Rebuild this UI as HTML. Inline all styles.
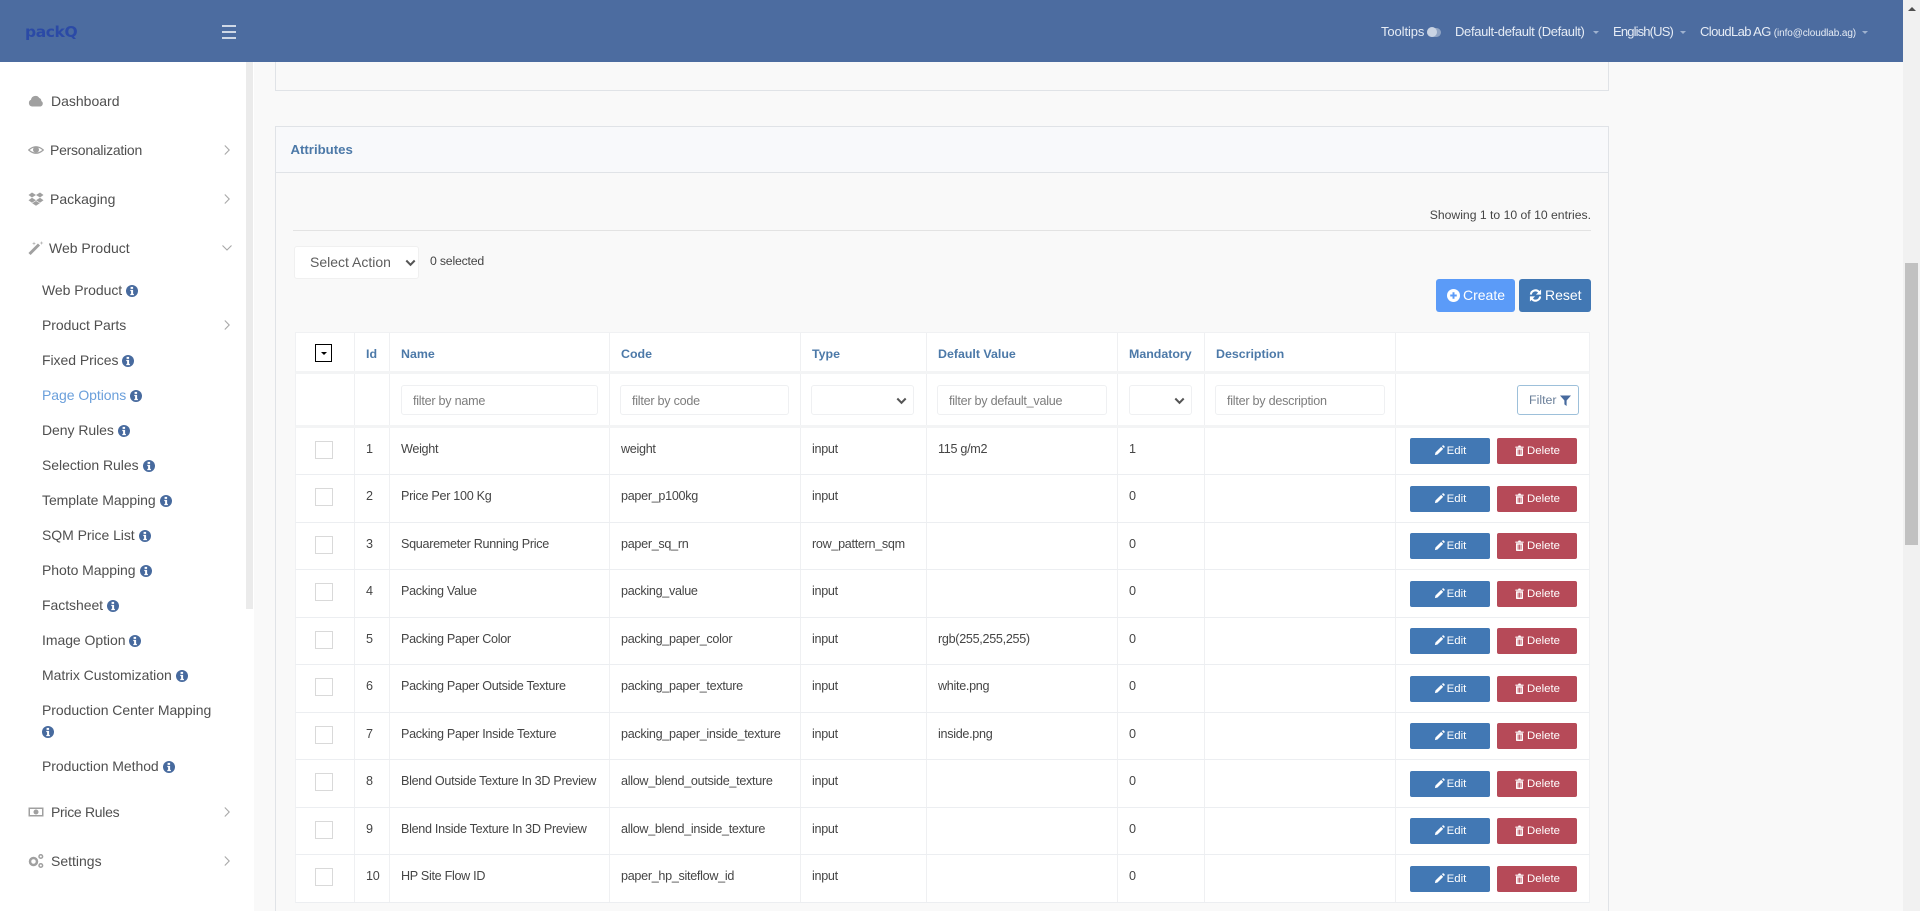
<!DOCTYPE html>
<html><head><meta charset="utf-8"><title>packQ</title>
<style>
*{box-sizing:border-box}
html,body{margin:0;padding:0;width:1920px;height:911px;overflow:hidden;background:#f9f9f9;font-family:"Liberation Sans",Arial,sans-serif;color:#454545}
#wrap{position:relative;width:1920px;height:911px;overflow:hidden}
.a{position:absolute;white-space:nowrap}
#hdr{position:absolute;left:0;top:0;width:1903px;height:62px;background:#4c6ca0;z-index:5}
.ht{position:absolute;top:24px;line-height:16px;font-size:13px;color:#e6ecf5;white-space:nowrap}
.car{position:absolute;top:31px;width:0;height:0;border-left:3px solid transparent;border-right:3px solid transparent;border-top:3px solid #9fb2cf}
.hb{position:absolute;left:222px;width:14px;height:2px;background:#cfd8e6}
#sb{position:absolute;left:0;top:62px;width:254px;height:849px;background:#fff}
#sbt{position:absolute;left:246px;top:62px;width:7px;height:547px;background:#ebebeb}
.m{position:absolute;font-size:14px;line-height:20px;color:#4f4f4f;white-space:nowrap}
.s{position:absolute;left:42px;font-size:14px;line-height:20px;color:#4f4f4f;white-space:nowrap;letter-spacing:-.05px}
.s svg{width:12px;height:12px;vertical-align:-1.5px;margin-left:4px}
.chev{position:absolute;left:223px;width:8px;height:12px}
.mi{position:absolute;left:28px;width:16px;height:16px}
#vs{position:absolute;left:1903px;top:0;width:17px;height:911px;background:#f1f1f1}
#vt{position:absolute;left:1905px;top:263px;width:13px;height:282px;background:#c1c1c1}
.p{position:absolute;left:275px;width:1334px;border:1px solid #e0e3e7;background:#f9f9f9}
.r{position:absolute;left:295px;width:1295px;display:grid;grid-template-columns:59px 35px 220px 191px 126px 191px 87px 191px 195px;background:#fff;border-bottom:1px solid #eceef1;font-size:12.6px;letter-spacing:-.3px;color:#454545;border-left:1px solid #f0f1f3;border-right:1px solid #f0f1f3}
.r>div{border-right:1px solid #eff0f2;padding:11px 0 0 11px;line-height:20px;white-space:nowrap;position:relative}
.r>div:last-child{border-right:0}
.r.h>div{font-weight:bold;color:#4c79a8;font-size:12.4px;padding-top:11px;letter-spacing:0}
.cb{position:absolute;left:19px;top:12.5px;width:18px;height:18px;border:1px solid #d9d9d9;background:#fff}
.f{position:absolute;top:385px;height:30px;border:1px solid #eff0f2;border-radius:3px;background:#fff;color:#7d7d7d;font-size:12.6px;letter-spacing:-.25px;line-height:30px;padding-left:11px;white-space:nowrap}
.f svg{position:absolute;right:6px;top:11px;width:11px;height:8px}
.b{position:absolute;height:26px;width:80px;border-radius:2px;color:#fff;font-size:11.4px;line-height:26px;text-align:center;white-space:nowrap}
.b svg{width:11px;height:11px;vertical-align:-1.5px;margin-right:2px}
.e{left:1410px;background:#4278b4}
.d{left:1497px;background:#b64a58}
</style></head><body><div id="wrap">
<svg width="0" height="0" style="position:absolute">
<symbol id="i" viewBox="0 0 12 12"><circle cx="6" cy="6" r="6" fill="#476a9e"/><rect x="4.6" y="1.9" width="2.5" height="2" fill="#fff"/><path d="M4.3 4.9H7.1V8.9H7.9V10.1H4.3V8.9H5.1V6.1H4.3Z" fill="#fff"/></symbol>
<symbol id="c" viewBox="0 0 8 12"><path d="M1.8 1.5L6.2 6L1.8 10.5" fill="none" stroke="#a8a8a8" stroke-width="1.1"/></symbol>
<symbol id="pen" viewBox="0 0 12 12"><path d="M1 11L1.6 8.2L7.8 2L10 4.2L3.8 10.4ZM8.6 1.2L9.4.5Q10 0 10.6.6L11.4 1.4Q12 2 11.5 2.6L10.8 3.4Z" fill="#fff"/></symbol>
<symbol id="tr" viewBox="0 0 12 12"><path d="M4.4 1.8L5 .5H7L7.6 1.8H10.5V3H1.5V1.8ZM2.2 3.6H9.8V11Q9.8 12 9 12H3Q2.2 12 2.2 11ZM4 5V10.5H5V5ZM5.6 5V10.5H6.6V5ZM7.2 5V10.5H8.2V5Z" fill="#fff" fill-rule="evenodd"/></symbol>
<symbol id="dn" viewBox="0 0 11 8"><path d="M1.3 1.5L5.5 5.8L9.7 1.5" fill="none" stroke="#555" stroke-width="2"/></symbol>
</svg>

<div id="hdr">
<div class="a" style="left:25px;top:20px;font-family:'DejaVu Sans',sans-serif;font-weight:bold;font-size:15.5px;line-height:24px;color:#2b4aa6;letter-spacing:-.4px">packQ</div>
<div class="hb" style="top:25px"></div><div class="hb" style="top:31px"></div><div class="hb" style="top:37px"></div>
<div class="ht" style="left:1381px;letter-spacing:-.1px">Tooltips</div>
<div class="a" style="left:1427px;top:27.5px;width:14px;height:9px;border-radius:5px;background:#8fa3c3"></div>
<div class="a" style="left:1427px;top:27px;width:10px;height:10px;border-radius:5px;background:#c9d3e3"></div>
<div class="ht" style="left:1455px;letter-spacing:-.34px">Default-default (Default)</div><div class="car" style="left:1593px"></div>
<div class="ht" style="left:1613px;letter-spacing:-.85px">English(US)</div><div class="car" style="left:1680px"></div>
<div class="ht" style="left:1700px;letter-spacing:-.6px">CloudLab AG <span style="font-size:10px;letter-spacing:-.1px">(info@cloudlab.ag)</span></div><div class="car" style="left:1862px"></div>
</div>

<div id="sb"></div><div id="sbt"></div>
<svg class="mi" style="top:93px" viewBox="0 0 16 16"><path d="M4 13.5A3.5 3.5 0 0 1 3 6.8 4.5 4.5 0 0 1 11.3 5 3 3 0 0 1 13.3 8 3 3 0 0 1 12.5 13.5Z" fill="#a0a0a0"/></svg>
<div class="m" style="left:51px;top:91px">Dashboard</div>
<svg class="mi" style="top:142px" viewBox="0 0 16 16"><path d="M.7 8Q8 1.5 15.3 8Q8 14.5.7 8Z" fill="none" stroke="#a0a0a0" stroke-width="1.2"/><circle cx="8" cy="7.8" r="3" fill="#a0a0a0"/></svg>
<div class="m" style="left:50px;top:140px;letter-spacing:-.25px">Personalization</div>
<svg class="chev" style="top:144px"><use href="#c"/></svg>
<svg class="mi" style="top:191px" viewBox="0 0 16 16"><path d="M4 1.5L8 4 4 6.5 .5 4ZM12 1.5L15.5 4 12 6.5 8 4ZM4 6.7L8 9.2 4 11.7 .5 9.2ZM12 6.7L15.5 9.2 12 11.7 8 9.2ZM4.2 12.3L8 10 11.8 12.3 8 14.8Z" fill="#a0a0a0"/></svg>
<div class="m" style="left:50px;top:189px">Packaging</div>
<svg class="chev" style="top:193px"><use href="#c"/></svg>
<svg class="mi" style="top:240px" viewBox="0 0 16 16"><path d="M1.5 14L11 4.5" stroke="#a0a0a0" stroke-width="3" fill="none"/><path d="M13.5 1L14 2.5 15.5 3 14 3.5 13.5 5 13 3.5 11.5 3 13 2.500ZM6 1.500L6.500 3 8 3.500 6.500 4 6 5.500 5.500 4 4 3.500 5.500 3Z" fill="#b5b5b5"/></svg>
<div class="m" style="left:49px;top:238px">Web Product</div>
<svg class="a" style="left:221px;top:244px;width:12px;height:8px" viewBox="0 0 12 8"><path d="M1.500 1.500L6 6 10.500 1.500" fill="none" stroke="#a8a8a8" stroke-width="1.100"/></svg>
<div class="s" style="top:280px">Web Product<svg><use href="#i"/></svg></div>
<div class="s" style="top:315px">Product Parts</div><svg class="chev" style="top:319px"><use href="#c"/></svg>
<div class="s" style="top:350px">Fixed Prices<svg><use href="#i"/></svg></div>
<div class="s" style="top:385px;color:#6a9fdb">Page Options<svg><use href="#i"/></svg></div>
<div class="s" style="top:420px">Deny Rules<svg><use href="#i"/></svg></div>
<div class="s" style="top:455px">Selection Rules<svg><use href="#i"/></svg></div>
<div class="s" style="top:490px">Template Mapping<svg><use href="#i"/></svg></div>
<div class="s" style="top:525px">SQM Price List<svg><use href="#i"/></svg></div>
<div class="s" style="top:560px">Photo Mapping<svg><use href="#i"/></svg></div>
<div class="s" style="top:595px">Factsheet<svg><use href="#i"/></svg></div>
<div class="s" style="top:630px">Image Option<svg><use href="#i"/></svg></div>
<div class="s" style="top:665px">Matrix Customization<svg><use href="#i"/></svg></div>
<div class="s" style="top:700px">Production Center Mapping</div>
<div class="s" style="top:721px"><svg style="margin-left:0"><use href="#i"/></svg></div>
<div class="s" style="top:756px">Production Method<svg><use href="#i"/></svg></div>
<svg class="mi" style="top:804px" viewBox="0 0 16 16"><path d="M.5 3.500H15.500V12.500H.5ZM2 5V11H14V5Z" fill="#a0a0a0" fill-rule="evenodd"/><rect x="5.500" y="5.500" width="5" height="5" rx="2.500" fill="#a0a0a0"/></svg>
<div class="m" style="left:51px;top:802px;letter-spacing:-.3px">Price Rules</div><svg class="chev" style="top:806px"><use href="#c"/></svg>
<svg class="mi" style="top:853px" viewBox="0 0 16 16"><circle cx="5.500" cy="8.500" r="3.500" fill="none" stroke="#a0a0a0" stroke-width="2.500"/><circle cx="12.800" cy="3.500" r="1.800" fill="none" stroke="#a0a0a0" stroke-width="1.500"/><circle cx="12.800" cy="12.500" r="1.800" fill="none" stroke="#a0a0a0" stroke-width="1.500"/></svg>
<div class="m" style="left:51px;top:851px">Settings</div><svg class="chev" style="top:855px"><use href="#c"/></svg>

<div class="p" style="top:50px;height:41px"></div>
<div class="p" style="top:126px;height:785px;border-bottom:0"></div>
<div class="a" style="left:276px;top:127px;width:1332px;height:46px;background:#f8f9fb;border-bottom:1px solid #e0e3e7"></div>
<div class="a" style="left:290.5px;top:140.5px;font-size:13.2px;line-height:18px;font-weight:bold;color:#4c79a8">Attributes</div>

<div class="a" style="right:329px;top:206px;font-size:12.2px;line-height:18px;color:#454545">Showing 1 to 10 of 10 entries.</div>
<div class="a" style="left:293px;top:230px;width:1298px;height:1px;background:#e3e3e3"></div>
<div class="a" style="left:294px;top:246px;width:125px;height:33px;background:#fff;border:1px solid #f0f0f0;border-radius:3px;font-size:14px;line-height:30px;padding-left:15px;color:#5d5d5d">Select Action<svg style="position:absolute;left:110px;top:12px;width:11px;height:8px"><use href="#dn"/></svg></div>
<div class="a" style="left:430px;top:252px;font-size:12.3px;line-height:18px;letter-spacing:-.2px">0 selected</div>
<div class="a" style="left:1436px;top:279px;width:79px;height:33px;background:#5b9bf8;border-radius:3px;color:#fff;font-size:14px;line-height:33px;padding-left:11px"><svg style="width:13px;height:13px;vertical-align:-2px;margin-right:3px" viewBox="0 0 12 12"><circle cx="6" cy="6" r="6" fill="#fff"/><path d="M6 3V9M3 6H9" stroke="#5b9bf8" stroke-width="1.800"/></svg>Create</div>
<div class="a" style="left:1519px;top:279px;width:72px;height:33px;background:#4278b4;border-radius:3px;color:#fff;font-size:14px;line-height:33px;padding-left:10px"><svg style="width:13px;height:13px;vertical-align:-2px;margin-right:3px" viewBox="0 0 14 14"><path d="M2 6A5 5 0 0 1 11 3.500M12 8A5 5 0 0 1 3 10.500" fill="none" stroke="#fff" stroke-width="2.200"/><path d="M13 .5V6H7.500ZM1 13.500V8H6.500Z" fill="#fff"/></svg>Reset</div>

<div class="r h" style="top:332px;height:42px;border-top:1px solid #f0f1f3;border-bottom:3px solid #f3f4f5"><div></div><div>Id</div><div>Name</div><div>Code</div><div>Type</div><div>Default Value</div><div>Mandatory</div><div>Description</div><div></div></div>
<div class="a" style="left:315px;top:344px;width:17px;height:18px;border:1px solid #000;background:#fff"></div>
<div class="a" style="left:320.500px;top:352px;width:0;height:0;border-left:3px solid transparent;border-right:3px solid transparent;border-top:3px solid #000"></div>
<div class="r" style="top:374px;height:54px;border-bottom:3px solid #f3f4f5"><div></div><div></div><div></div><div></div><div></div><div></div><div></div><div></div><div></div></div>
<div class="f" style="left:401px;width:197px">filter by name</div>
<div class="f" style="left:620px;width:169px">filter by code</div>
<div class="f" style="left:811px;width:103px"><svg><use href="#dn"/></svg></div>
<div class="f" style="left:937px;width:170px">filter by default_value</div>
<div class="f" style="left:1129px;width:63px"><svg><use href="#dn"/></svg></div>
<div class="f" style="left:1215px;width:170px">filter by description</div>
<div class="a" style="left:1517px;top:385px;width:62px;height:30px;border:1px solid #9dc0da;border-radius:3px;background:#fff;color:#6a7f99;font-size:12.400px;line-height:28px;padding-left:11px">Filter <svg style="width:11px;height:11px;vertical-align:-1.500px" viewBox="0 0 10 10"><path d="M0 .5H10L6 5V10L4 8.500V5Z" fill="#476a9e"/></svg></div>

<div class="r" style="top:428px;height:47px"><div><span class="cb"></span></div><div>1</div><div>Weight</div><div>weight</div><div>input</div><div>115 g/m2</div><div>1</div><div></div><div></div></div>
<div class="r" style="top:475px;height:48px"><div><span class="cb"></span></div><div>2</div><div>Price Per 100 Kg</div><div>paper_p100kg</div><div>input</div><div></div><div>0</div><div></div><div></div></div>
<div class="r" style="top:523px;height:47px"><div><span class="cb"></span></div><div>3</div><div>Squaremeter Running Price</div><div>paper_sq_rn</div><div>row_pattern_sqm</div><div></div><div>0</div><div></div><div></div></div>
<div class="r" style="top:570px;height:48px"><div><span class="cb"></span></div><div>4</div><div>Packing Value</div><div>packing_value</div><div>input</div><div></div><div>0</div><div></div><div></div></div>
<div class="r" style="top:618px;height:47px"><div><span class="cb"></span></div><div>5</div><div>Packing Paper Color</div><div>packing_paper_color</div><div>input</div><div>rgb(255,255,255)</div><div>0</div><div></div><div></div></div>
<div class="r" style="top:665px;height:48px"><div><span class="cb"></span></div><div>6</div><div>Packing Paper Outside Texture</div><div>packing_paper_texture</div><div>input</div><div>white.png</div><div>0</div><div></div><div></div></div>
<div class="r" style="top:713px;height:47px"><div><span class="cb"></span></div><div>7</div><div>Packing Paper Inside Texture</div><div>packing_paper_inside_texture</div><div>input</div><div>inside.png</div><div>0</div><div></div><div></div></div>
<div class="r" style="top:760px;height:48px"><div><span class="cb"></span></div><div>8</div><div>Blend Outside Texture In 3D Preview</div><div>allow_blend_outside_texture</div><div>input</div><div></div><div>0</div><div></div><div></div></div>
<div class="r" style="top:808px;height:47px"><div><span class="cb"></span></div><div>9</div><div>Blend Inside Texture In 3D Preview</div><div>allow_blend_inside_texture</div><div>input</div><div></div><div>0</div><div></div><div></div></div>
<div class="r" style="top:855px;height:48px"><div><span class="cb"></span></div><div>10</div><div>HP Site Flow ID</div><div>paper_hp_siteflow_id</div><div>input</div><div></div><div>0</div><div></div><div></div></div>

<div class="b e" style="top:438px"><svg><use href="#pen"/></svg>Edit</div><div class="b d" style="top:438px"><svg><use href="#tr"/></svg>Delete</div>
<div class="b e" style="top:486px"><svg><use href="#pen"/></svg>Edit</div><div class="b d" style="top:486px"><svg><use href="#tr"/></svg>Delete</div>
<div class="b e" style="top:533px"><svg><use href="#pen"/></svg>Edit</div><div class="b d" style="top:533px"><svg><use href="#tr"/></svg>Delete</div>
<div class="b e" style="top:581px"><svg><use href="#pen"/></svg>Edit</div><div class="b d" style="top:581px"><svg><use href="#tr"/></svg>Delete</div>
<div class="b e" style="top:628px"><svg><use href="#pen"/></svg>Edit</div><div class="b d" style="top:628px"><svg><use href="#tr"/></svg>Delete</div>
<div class="b e" style="top:676px"><svg><use href="#pen"/></svg>Edit</div><div class="b d" style="top:676px"><svg><use href="#tr"/></svg>Delete</div>
<div class="b e" style="top:723px"><svg><use href="#pen"/></svg>Edit</div><div class="b d" style="top:723px"><svg><use href="#tr"/></svg>Delete</div>
<div class="b e" style="top:771px"><svg><use href="#pen"/></svg>Edit</div><div class="b d" style="top:771px"><svg><use href="#tr"/></svg>Delete</div>
<div class="b e" style="top:818px"><svg><use href="#pen"/></svg>Edit</div><div class="b d" style="top:818px"><svg><use href="#tr"/></svg>Delete</div>
<div class="b e" style="top:866px"><svg><use href="#pen"/></svg>Edit</div><div class="b d" style="top:866px"><svg><use href="#tr"/></svg>Delete</div>

<div id="vs"></div><div id="vt"></div>
<div class="a" style="left:1907.500px;top:7px;width:0;height:0;border-left:4px solid transparent;border-right:4px solid transparent;border-bottom:4px solid #505050"></div>
</div></body></html>
